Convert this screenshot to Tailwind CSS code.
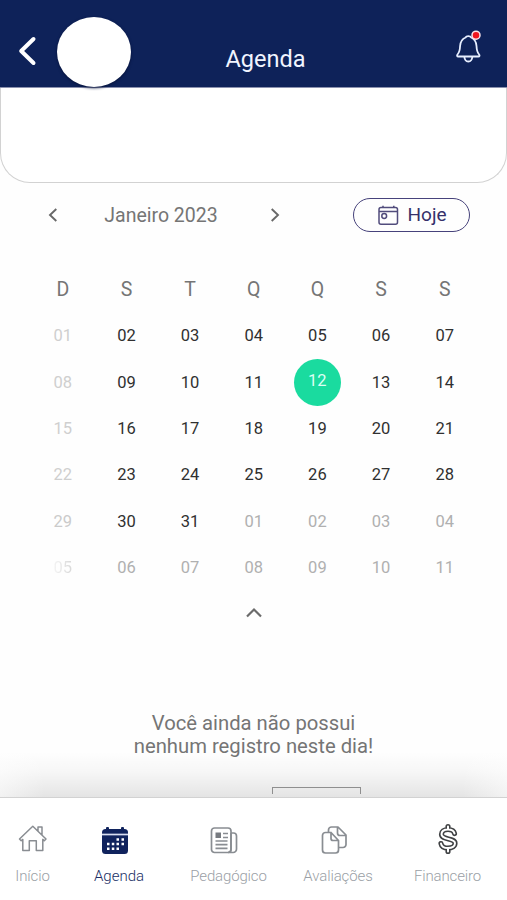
<!DOCTYPE html>
<html lang="pt-BR">
<head>
<meta charset="utf-8">
<meta name="viewport" content="width=device-width">
<title>Agenda</title>
<script src="https://cdn.jsdelivr.net/npm/@tailwindcss/browser@4"></script>
</head>
<body class="bg-white">
<div class="w-[507px] h-[900px] overflow-hidden flex flex-col bg-[#fefefe] font-['Roboto','Liberation_Sans',sans-serif] text-[#757575]">
  <header class="relative h-[88px] shrink-0 bg-[#0e2259] border-b border-[#8b91ae] flex items-start">
    <svg class="mt-[35px] ml-[17px] w-[20px] h-[32px]" viewBox="0 0 20 32" fill="none" stroke="#fff" stroke-width="4" stroke-linecap="round" stroke-linejoin="round"><path d="M16.500 4 4.200 16 16.500 28"/></svg>
    <div class="mt-[17px] ml-[20px] w-[74px] h-[70px] rounded-[50%] bg-white shadow-[0_1px_3px_#06123a]"></div>
    <h1 class="mt-[43px] ml-[95px] w-[79px] flex justify-center whitespace-nowrap text-[23.500px] leading-[32px] text-[#f1f5ff]">Agenda</h1>
    <svg class="mt-[28px] ml-[149px] w-[30px] h-[38px]" viewBox="0 0 30 38" fill="none" stroke="#e6eeff" stroke-width="1.800" stroke-linejoin="round"><path d="M11.500 9.500C12 8.600 12.800 8.200 14.300 8.200s2.400.4 2.900 1.300c3.300 1.500 5.100 4.700 5.300 8.500.2 4.500.9 6.700 2.600 8.500.8.900.5 2-.8 2H4.300c-1.300 0-1.600-1.100-.8-2 1.700-1.800 2.400-4 2.600-8.500.2-3.800 2.100-7 5.400-8.500Z"/><path d="M10.300 28.500c.3 3.500 2 5 4 5s3.800-1.500 4.100-5"/><circle cx="22" cy="7.200" r="4" fill="#ef151f" stroke="#fbe3e9" stroke-width="1.500"/></svg>
  </header>
  <section class="h-[95px] shrink-0 bg-white border-[1.500px] border-t-0 border-[#d2d2d2] rounded-b-[30px]"></section>
  <section class="h-[64px] shrink-0 flex items-center">
    <svg class="ml-[46px] w-[14px] h-[18px]" viewBox="0 0 14 18" fill="none" stroke="#686868" stroke-width="1.900"><path d="m10.300 3-6.300 6 6.300 6"/></svg>
    <div class="ml-[44px] w-[114px] flex justify-center whitespace-nowrap text-[19.500px] pt-[2px]">Janeiro 2023</div>
    <svg class="ml-[50px] w-[14px] h-[18px]" viewBox="0 0 14 18" fill="none" stroke="#686868" stroke-width="1.900"><path d="m3.700 3 6.300 6-6.300 6"/></svg>
    <button class="ml-[70.500px] w-[117.500px] h-[34.500px] border-[1.500px] border-[#46427b] rounded-full flex items-center text-[#35306a]">
      <svg class="ml-[24px] w-[21px] h-[21px]" viewBox="0 0 21 21" fill="none" stroke="#514c7c" stroke-width="1.500"><rect x="1" y="2.500" width="18.500" height="16.800" rx="2"/><path d="M1 6.500h18.500M5 .7v2M15.800.7v2"/><circle cx="6.200" cy="11" r="2.400"/></svg>
      <span class="ml-[9px] whitespace-nowrap text-[19px] leading-[24px]">Hoje</span>
    </button>
  </section>
  <main class="h-[550px] shrink-0 flex flex-col">
    <div class="mt-[18px] ml-[31px] w-[445.500px] grid grid-cols-7 h-[48px] items-center text-center text-[19.500px] pt-px">
      <span>D</span><span>S</span><span>T</span><span>Q</span><span>Q</span><span>S</span><span>S</span>
    </div>
    <div class="ml-[31px] w-[445.500px] grid grid-cols-7 auto-rows-[46.400px] items-center text-center text-[16.500px] leading-[26px] text-[#303030]">
      <span class="text-[#cfcfcf]">01</span><span>02</span><span>03</span><span>04</span><span>05</span><span>06</span><span>07</span>
      <span class="text-[#cfcfcf]">08</span><span>09</span><span>10</span><span>11</span><span class="justify-self-center size-[47px] rounded-full bg-[#1adb9f] text-[#dcfff4] leading-[44px]">12</span><span>13</span><span>14</span>
      <span class="text-[#cfcfcf]">15</span><span>16</span><span>17</span><span>18</span><span>19</span><span>20</span><span>21</span>
      <span class="text-[#cfcfcf]">22</span><span>23</span><span>24</span><span>25</span><span>26</span><span>27</span><span>28</span>
      <span class="text-[#cbcbcb]">29</span><span>30</span><span>31</span><span class="text-[#b0b0b0]">01</span><span class="text-[#b0b0b0]">02</span><span class="text-[#b0b0b0]">03</span><span class="text-[#b0b0b0]">04</span>
      <span class="text-transparent bg-clip-text bg-linear-to-r from-[#f4f4f4] from-35% to-[#d8d8d8] to-65%">05</span><span class="text-[#b0b0b0]">06</span><span class="text-[#b0b0b0]">07</span><span class="text-[#b0b0b0]">08</span><span class="text-[#b0b0b0]">09</span><span class="text-[#b0b0b0]">10</span><span class="text-[#b0b0b0]">11</span>
    </div>
    <svg class="mt-[14px] self-center w-[20px] h-[16px]" viewBox="0 0 20 16" fill="none" stroke="#6b6b6b" stroke-width="2.200"><path d="m3 11.500 7-7 7 7"/></svg>
    <p class="mt-[91px] text-center text-[20.250px] leading-[23px]">Você ainda não possui<br>nenhum registro neste dia!</p>
    <div class="flex-1 mt-[-6px] flex items-end bg-[linear-gradient(to_right,#fefefe88,transparent_45px,transparent_462px,#fefefe88),linear-gradient(to_bottom,transparent,#00000008_45%,#0000001a)]">
      <div class="ml-[272px] w-[89px] h-[7px] mb-[3px] border border-b-0 border-[#8f8f8f]"></div>
    </div>
  </main>
  <nav class="h-[103px] shrink-0 bg-white border-t border-[#d2d2d2] text-[15px] font-light text-[#9b9fa6]">
    <div class="flex pt-[23px] h-full">
      <div class="w-[65px] flex flex-col items-center">
        <svg class="w-[32px] h-[36px]" viewBox="0 0 32 36" fill="none" stroke="#898d92" stroke-width="1.500" stroke-linejoin="round"><path d="m2.500 18 13.300-12.700L29 18l-1.700 1.700-1.500-1.300v11h-6.500V19.700h-7v9.700H5.800v-11l-1.600 1.400ZM21 10V6h4v8"/></svg>
        <span class="mt-[8px] leading-[22px] tracking-[-0.100px]">Início</span>
      </div>
      <div class="w-[108px] flex flex-col items-center text-[#202f65]">
        <svg class="mr-[9px] w-[32px] h-[36px]" viewBox="0 0 32 36"><rect x="3" y="8" width="26" height="25" rx="3.500" fill="#10235d"/><rect x="7" y="6" width="3" height="5" rx="1" fill="#10235d"/><rect x="22" y="6" width="3" height="5" rx="1" fill="#10235d"/><path d="M3 13.500h26" stroke="#d9def0" stroke-width="1.700"/><path d="M17.500 18.500h2.500m2.500 0h2.500M8 23h2.500m2.300 0h2.500m2.200 0h2.500m2.500 0h2.500M8 27.700h2.500m2.300 0h2.500m2.200 0h2.500" stroke="#fff" stroke-width="2.500"/></svg>
        <span class="mt-[8px] leading-[22px]">Agenda</span>
      </div>
      <div class="w-[111px] flex flex-col items-center">
        <svg class="mr-[9px] w-[32px] h-[36px]" viewBox="0 0 32 36" fill="none" stroke="#898d92" stroke-width="1.700"><rect x="3.500" y="7" width="19.500" height="24.500" rx="3"/><path d="M23 12h2.500a3 3 0 0 1 3 3v13a3.400 3.400 0 0 1-3.400 3.500H20M23 12v15.800c0 2-1 3.700-3 3.700M15 12.500h5M15 16.500h5M7.500 20h12M7.500 23.700h12M7.500 27.400h12"/><path d="M7.500 11.500h5.500v5.500H7.500z" fill="#777b80" stroke="none"/></svg>
        <span class="mt-[8px] leading-[22px] tracking-[-0.150px]">Pedagógico</span>
      </div>
      <div class="w-[108px] flex flex-col items-center">
        <svg class="mr-[9px] w-[32px] h-[36px]" viewBox="0 0 32 36" fill="none" stroke="#898d92" stroke-width="1.700" stroke-linejoin="round"><path d="M13 11.500H7.500a3 3 0 0 0-3 3V29a3 3 0 0 0 3 3h10a3 3 0 0 0 3-3v-9.500l-7.500-8V17.500q0 2 2 2h5.500"/><path d="M10.500 11.500v-2.500a3 3 0 0 1 3-3H20l8 8v9.500a3 3 0 0 1-3 3h-4.500M19.500 6V12q0 2.500 2.500 2.500H28"/></svg>
        <span class="mt-[8px] leading-[22px] tracking-[-0.100px]">Avaliações</span>
      </div>
      <div class="w-[111px] flex flex-col items-center">
        <svg class="w-[32px] h-[36px]" viewBox="0 0 32 36" fill="none" stroke-linecap="round"><path stroke="#3f4143" stroke-width="5.200" d="M16 5.500v3M16 27v3.500M22.500 12.500c-.5-2.500-3-4-6.500-4-4 0-6.500 1.800-6.500 4.800 0 6.200 13.500 3.200 13.500 9 0 3-3 4.800-7 4.800s-6.500-1.700-7-4.500"/><path stroke="#fff" stroke-width="2" d="M16 5.500v3M16 27v3.500M22.500 12.500c-.5-2.500-3-4-6.500-4-4 0-6.500 1.800-6.500 4.800 0 6.200 13.500 3.200 13.500 9 0 3-3 4.800-7 4.800s-6.500-1.700-7-4.500"/></svg>
        <span class="mt-[8px] leading-[22px] tracking-[-0.150px]">Financeiro</span>
      </div>
    </div>
  </nav>
</div>
</body>
</html>
